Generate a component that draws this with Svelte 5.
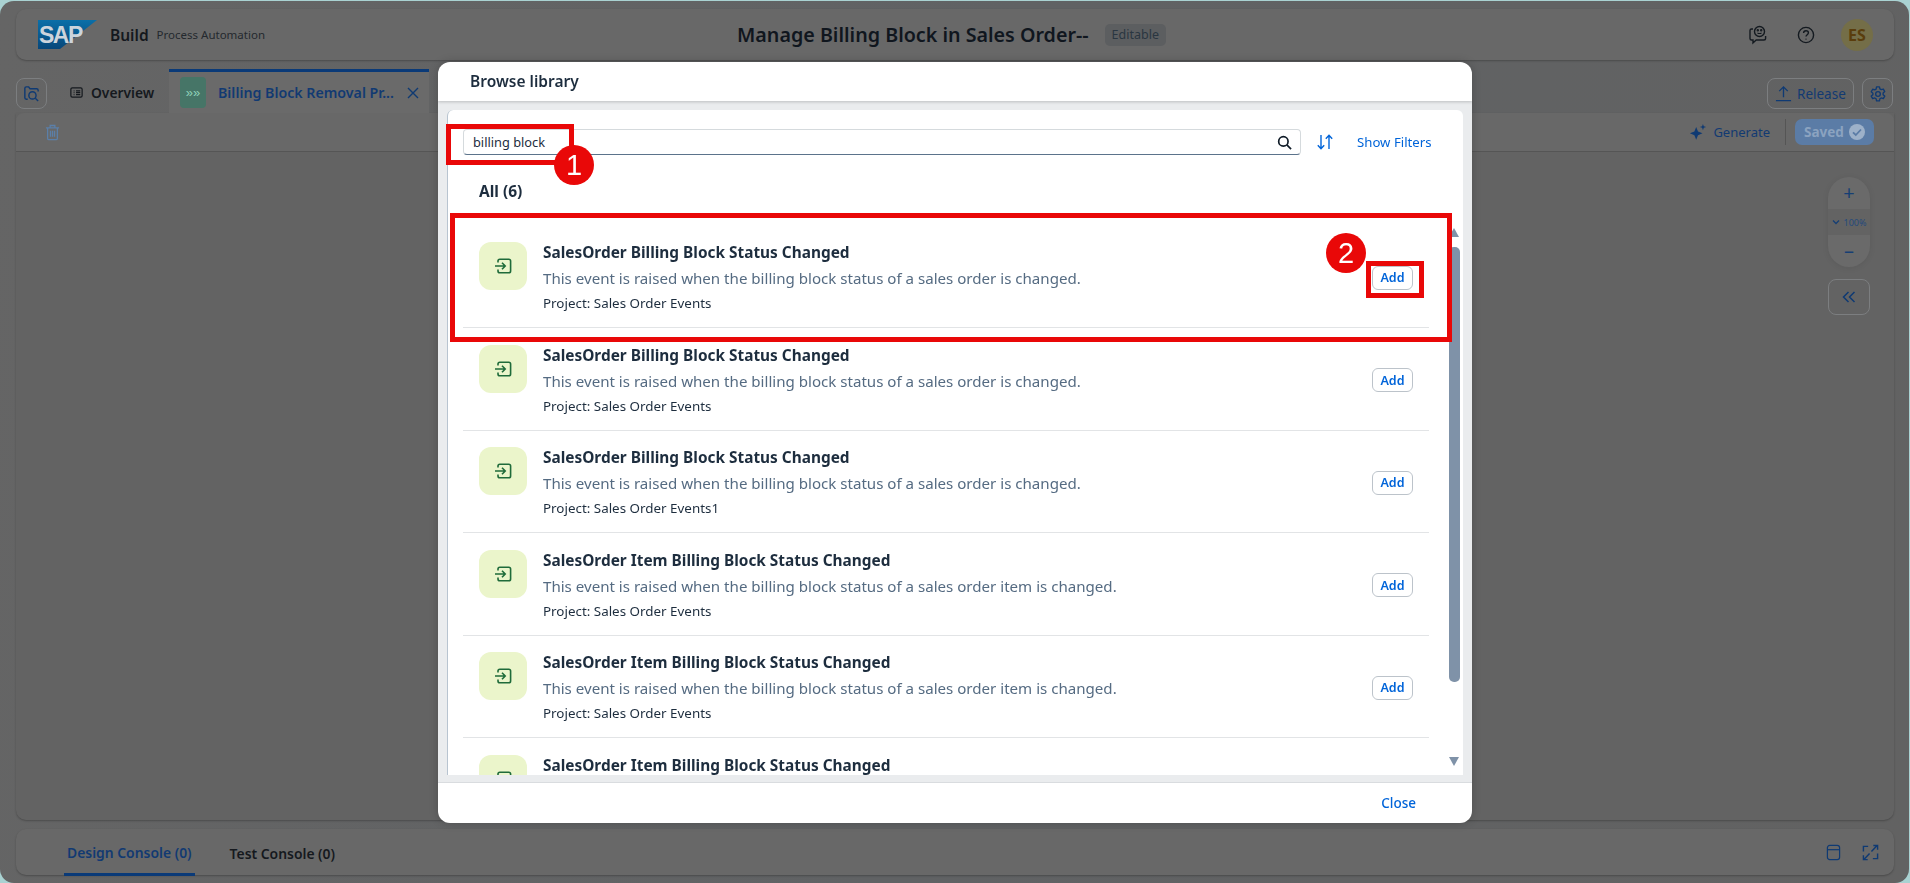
<script>
  const rows = [
    { title: 'SalesOrder Billing Block Status Changed', desc: 'This event is raised when the billing block status of a sales order is changed.', project: 'Sales Order Events' },
    { title: 'SalesOrder Billing Block Status Changed', desc: 'This event is raised when the billing block status of a sales order is changed.', project: 'Sales Order Events' },
    { title: 'SalesOrder Billing Block Status Changed', desc: 'This event is raised when the billing block status of a sales order is changed.', project: 'Sales Order Events1' },
    { title: 'SalesOrder Item Billing Block Status Changed', desc: 'This event is raised when the billing block status of a sales order item is changed.', project: 'Sales Order Events' },
    { title: 'SalesOrder Item Billing Block Status Changed', desc: 'This event is raised when the billing block status of a sales order item is changed.', project: 'Sales Order Events' },
    { title: 'SalesOrder Item Billing Block Status Changed' }
  ];
</script>

<div class="shell">
  <header class="card top">
    <div class="brand">
      <svg class="logo" viewBox="0 0 59 29" width="59" height="29" aria-hidden="true">
        <defs>
          <linearGradient id="sapg" x1="0" y1="0" x2="0" y2="1">
            <stop offset="0" stop-color="#0b6fa8" />
            <stop offset="1" stop-color="#07477a" />
          </linearGradient>
        </defs>
        <polygon points="0,0 59,0 22,29 0,29" fill="url(#sapg)" />
        <text x="1" y="23" class="logotext">SAP</text>
      </svg>
      <span class="build">Build</span>
      <span class="pa">Process Automation</span>
    </div>
    <div class="titlewrap">
      <span class="title">Manage Billing Block in Sales Order--</span>
      <span class="badge">Editable</span>
    </div>
    <div class="topicons">
      <svg viewBox="0 0 20 20" width="20" height="20" fill="none" stroke="#141a20" stroke-width="1.4" aria-hidden="true">
        <circle cx="11.5" cy="6.5" r="5" />
        <path d="M9.5 7.8c1 1 3 1 4 0" stroke-width="1.1" />
        <circle cx="9.8" cy="5.2" r=".5" fill="#141a20" />
        <circle cx="13.2" cy="5.2" r=".5" fill="#141a20" />
        <path d="M5 4H3.5C2.5 4 2 4.6 2 5.5v8C2 14.5 2.6 15 3.5 15H5v3l3.2-3H16c1 0 1.6-.6 1.6-1.5V11" />
      </svg>
      <svg viewBox="0 0 20 20" width="20" height="20" fill="none" stroke="#141a20" stroke-width="1.4" aria-hidden="true">
        <circle cx="10" cy="10" r="7.6" />
        <path d="M7.6 8c0-1.5 1.1-2.3 2.4-2.3s2.4.9 2.4 2.1c0 1.9-2.4 1.9-2.4 3.8" />
        <circle cx="10" cy="14.1" r=".7" fill="#141a20" stroke="none" />
      </svg>
      <span class="avatar">ES</span>
    </div>
  </header>

  <nav class="tabs">
    <button class="iconbtn" aria-label="Search">
      <svg viewBox="0 0 20 20" width="19" height="19" fill="none" stroke="#0f3a73" stroke-width="1.5" aria-hidden="true">
        <path d="M6 16H4.5C3.6 16 3 15.4 3 14.5v-10C3 3.6 3.6 3 4.5 3H7l1.4 2h7c.9 0 1.6.6 1.6 1.5V8" />
        <circle cx="11" cy="12" r="3.8" />
        <path d="M14 15l3 3" />
      </svg>
    </button>
    <div class="tab overview">
      <svg viewBox="0 0 16 16" width="15" height="15" fill="none" stroke="#15191e" stroke-width="1.3" aria-hidden="true">
        <rect x="2" y="3" width="12" height="10" rx="1.5" />
        <path d="M5 6.2h.8M7.5 6.2H12M5 8.2h.8M7.5 8.2H12M5 10.2h.8M7.5 10.2H12" />
      </svg>
      <span>Overview</span>
    </div>
    <div class="tab active">
      <span class="tile" aria-hidden="true">»»</span>
      <span class="tabtext">Billing Block Removal Pr...</span>
      <svg viewBox="0 0 14 14" width="14" height="14" fill="none" stroke="#0f3a73" stroke-width="1.4" aria-hidden="true">
        <path d="M2 2l10 10M12 2L2 12" />
      </svg>
    </div>
    <div class="tabactions">
      <button class="outline release">
        <svg viewBox="0 0 18 18" width="17" height="17" fill="none" stroke="#0f3a73" stroke-width="1.4" aria-hidden="true">
          <path d="M9 13V2M4.5 6.5L9 2l4.5 4.5M1 16.5h16" />
        </svg>
        <span>Release</span>
      </button>
      <button class="iconbtn gear" aria-label="Settings">
        <svg viewBox="0 0 20 20" width="18" height="18" fill="none" stroke="#0f3a73" stroke-width="1.5" aria-hidden="true">
          <path d="M8.4 2h3.2l.5 2.3 1.5.9 2.3-.7 1.6 2.8-1.8 1.6v1.800l1.800 1.600-1.600 2.800-2.300-.7-1.500.9-.5 2.300H8.400l-.5-2.300-1.500-.9-2.300.7-1.600-2.800 1.800-1.600V9.100L2.500 7.500l1.600-2.800 2.300.7 1.500-.9z" stroke-linejoin="round" />
          <circle cx="10" cy="10" r="2.6" />
        </svg>
      </button>
    </div>
  </nav>

  <main class="workspace">
    <div class="toolbar">
      <svg class="trash" viewBox="0 0 16 18" width="15" height="17" fill="none" stroke="#5b7fa8" stroke-width="1.4" aria-hidden="true">
        <path d="M1 4h14M5.500 4V1.500h5V4M2.800 4v11.500c0 .6.400 1 1 1h8.400c.6 0 1-.4 1-1V4M5.800 7v6.500M8 7v6.500M10.200 7v6.500" />
      </svg>
      <div class="toolright">
        <span class="generate">
          <svg viewBox="0 0 20 20" width="18" height="18" fill="#0f3a73" aria-hidden="true">
            <path d="M8 4.500l2 5 5 2-5 2-2 5-2-5-5-2 5-2zM15.500 1l.9 2.600L19 4.500l-2.600.9-.9 2.600-.9-2.600L12 4.500l2.600-.9z" />
          </svg>
          <span>Generate</span>
        </span>
        <span class="vsep"></span>
        <span class="saved">
          <span>Saved</span>
          <svg viewBox="0 0 16 16" width="16" height="16" aria-hidden="true">
            <circle cx="8" cy="8" r="8" fill="#9db1c9" />
            <path d="M4 8.300l2.800 2.700L12 5.500" fill="none" stroke="#5b7ca6" stroke-width="1.8" />
          </svg>
        </span>
      </div>
    </div>
    <div class="canvas">
      <div class="canvastools">
        <div class="zoompill">
          <span class="zbtn">+</span>
          <span class="zlevel"><svg viewBox="0 0 8 6" width="8" height="6" fill="none" stroke="#163f74" stroke-width="1.3" aria-hidden="true"><path d="M1 1.500l3 3 3-3" /></svg>100%</span>
          <span class="zbtn">–</span>
        </div>
        <button class="collapse" aria-label="Collapse">
          <svg viewBox="0 0 14 12" width="14" height="12" fill="none" stroke="#0f3a73" stroke-width="1.5" aria-hidden="true"><path d="M6.500 1L1.500 6l5 5M12.500 1l-5 5 5 5" /></svg>
        </button>
      </div>
    </div>
  </main>

  <footer class="card console">
    <div class="ctab on">Design Console (0)</div>
    <div class="ctab">Test Console (0)</div>
    <div class="consoleicons">
      <svg viewBox="0 0 16 18" width="15" height="17" fill="none" stroke="#0f3a73" stroke-width="1.3" aria-hidden="true">
        <rect x="1.500" y="1.500" width="13" height="15" rx="2.500" /><path d="M1.500 6h13" />
      </svg>
      <svg viewBox="0 0 18 18" width="17" height="17" fill="none" stroke="#0f3a73" stroke-width="1.5" aria-hidden="true">
        <path d="M1.500 8V2.500h5M16.500 10v5.500h-5M10 8l6-6.500M12 1.500h4.500V6M8 10l-6 6.500M6 16.500H1.500V12" />
      </svg>
    </div>
  </footer>
</div>

<div class="overlay">
  <section class="dialog">
    <h2 class="dhead">Browse library</h2>
    <div class="dbody">
      <div class="panel">
        <div class="searchrow">
          <div class="search">
            <span class="q">billing block</span>
            <svg viewBox="0 0 16 16" width="15" height="15" fill="none" stroke="#101c28" stroke-width="1.8" aria-hidden="true">
              <circle cx="6.800" cy="6.800" r="5" /><path d="M10.500 10.500L15 15" />
            </svg>
          </div>
          <svg class="sort" viewBox="0 0 18 18" width="18" height="18" fill="none" stroke="#0064d9" stroke-width="1.4" aria-hidden="true">
            <path d="M5 2v13.500M1.800 12.300L5 15.800l3.200-3.500M13 16V2.500M9.800 5.700L13 2.200l3.200 3.500" />
          </svg>
          <span class="filters">Show Filters</span>
        </div>
        <div class="allcount">All (6)</div>
        <div class="listwrap">
          <ul class="list">
            {#each rows as r}
              <li class="row">
                <span class="evt">
                  <svg viewBox="0 0 18 16" width="18" height="16" fill="none" stroke="#1f6b3a" stroke-width="1.6" aria-hidden="true">
                    <path d="M4 4.500V3c0-1 .6-1.800 1.800-1.800h9c1.100 0 1.800.7 1.800 1.800v10c0 1-.7 1.800-1.800 1.800h-9C4.600 14.800 4 14 4 13v-1.500" />
                    <path d="M1 8h10M8 4.800L11.200 8 8 11.200" />
                  </svg>
                </span>
                <div class="info">
                  <div class="rtitle">{r.title}</div>
                  {#if r.desc}
                    <div class="rdesc">{r.desc}</div>
                    <div class="rproj">Project: {r.project}</div>
                  {/if}
                </div>
                {#if r.desc}
                  <button class="add">Add</button>
                {/if}
              </li>
            {/each}
          </ul>
          <div class="scrollbar" aria-hidden="true">
            <span class="arrow up"></span>
            <span class="thumb"></span>
            <span class="arrow down"></span>
          </div>
        </div>
      </div>
    </div>
    <div class="dfoot"><span class="close">Close</span></div>
  </section>

  <span class="mark m1"></span>
  <span class="num n1">1</span>
  <span class="mark m2"></span>
  <span class="num n2">2</span>
  <span class="mark m3"></span>
</div>

<style>
  :global(body) {
    margin: 0;
    background: #a9d2d2;
    font-family: "Noto Sans", "Open Sans", sans-serif;
    overflow: hidden;
  }
  button {
    font: inherit;
    background: none;
    cursor: pointer;
    padding: 0;
  }
  .shell {
    box-sizing: border-box;
    width: 1909px;
    height: 882px;
    margin-top: 1px;
    padding: 8px 15px 8px 16px;
    display: flex;
    flex-direction: column;
    background: linear-gradient(100deg, #656565 0%, #606264 50%, #626262 100%);
    border-radius: 14px;
    color: #14181d;
  }
  .card {
    background: #686868;
    border-radius: 10px;
    box-shadow: 0 1px 2px rgba(0, 0, 0, 0.25);
  }
  .top {
    height: 51px;
    display: grid;
    grid-template-columns: 1fr auto 1fr;
    align-items: center;
    padding: 0 21px 0 22px;
    flex: none;
  }
  .brand {
    display: flex;
    align-items: center;
  }
  .logo {
    margin-right: 13px;
  }
  .logotext {
    font: 700 23px "Liberation Sans", sans-serif;
    fill: #ccd4dc;
    letter-spacing: -1.5px;
  }
  .build {
    font-size: 15.5px;
    font-weight: 600;
    color: #14181d;
    margin-right: 8px;
  }
  .pa {
    font-size: 11.5px;
    color: #24292e;
  }
  .titlewrap {
    display: flex;
    align-items: center;
    gap: 16px;
    margin-left: -8px;
  }
  .title {
    font-size: 19.7px;
    font-weight: 600;
    color: #10161e;
  }
  .badge {
    font-size: 12.5px;
    color: #2a3641;
    background: #5c5e60;
    border-radius: 5px;
    padding: 0 7px;
    height: 22px;
    line-height: 22px;
  }
  .topicons {
    display: flex;
    align-items: center;
    justify-content: flex-end;
    gap: 28px;
  }
  .avatar {
    width: 32px;
    height: 32px;
    border-radius: 50%;
    background: #746e48;
    color: #5a3d0c;
    font-size: 16px;
    font-weight: 700;
    display: flex;
    align-items: center;
    justify-content: center;
    margin-left: -3px;
  }
  .tabs {
    flex: none;
    display: flex;
    align-items: stretch;
    height: 44px;
    margin-top: 9px;
    position: relative;
  }
  .iconbtn {
    width: 31px;
    height: 31px;
    margin-top: 9px;
    flex: none;
    box-sizing: border-box;
    border: 1px solid #7c7e80;
    border-radius: 8px;
    display: flex;
    align-items: center;
    justify-content: center;
  }
  .tab {
    display: flex;
    align-items: center;
    font-weight: 600;
  }
  .overview {
    margin-left: 22px;
    gap: 7px;
    width: 100px;
    color: #15191e;
    margin-top: 2px;
    font-size: 13.8px;
  }
  .active {
    width: 260px;
    box-sizing: border-box;
    border-top: 3px solid #0a3a78;
    background: #6a6a6a;
    padding: 0 9px 0 11px;
    color: #123a72;
    font-size: 14.2px;
  }
  .tile {
    width: 26px;
    height: 31px;
    border-radius: 4px;
    background: #467567;
    color: #8fd0b8;
    font: 400 13px "Liberation Sans", sans-serif;
    display: flex;
    align-items: center;
    justify-content: center;
    margin-right: 12px;
  }
  .tabtext {
    flex: 1;
    white-space: nowrap;
  }
  .tabactions {
    margin-left: auto;
    display: flex;
    gap: 8px;
    margin-right: 1px;
  }
  .outline {
    height: 31px;
    margin-top: 9px;
    box-sizing: border-box;
    border: 1px solid #7c7e80;
    border-radius: 8px;
    display: flex;
    align-items: center;
    gap: 5px;
    padding: 0 7px;
    width: 87px;
    color: #123a72;
    font-size: 13.5px;
  }
  .gear {
    width: 31px;
  }
  .workspace {
    flex: 1;
    display: flex;
    flex-direction: column;
    background: #636363;
    border-radius: 0 0 10px 10px;
    box-shadow: 0 1px 2px rgba(0, 0, 0, 0.25);
    min-height: 0;
  }
  .toolbar {
    flex: none;
    height: 39px;
    box-sizing: border-box;
    border-bottom: 1px solid #555;
    background: #686868;
    border-radius: 8px 8px 0 0;
    display: flex;
    align-items: center;
    justify-content: space-between;
    padding: 0 20px 0 29px;
  }
  .toolright {
    display: flex;
    align-items: center;
  }
  .generate {
    display: flex;
    align-items: center;
    gap: 6px;
    color: #123a72;
    font-size: 13px;
  }
  .vsep {
    width: 1px;
    height: 26px;
    background: #555;
    margin: 0 9px 0 15px;
  }
  .saved {
    width: 79px;
    height: 26px;
    box-sizing: border-box;
    background: #5b7ca6;
    color: #8ba3c0;
    border-radius: 7px;
    font-size: 13.5px;
    font-weight: 700;
    display: flex;
    align-items: center;
    justify-content: center;
    gap: 5px;
  }
  .canvas {
    flex: 1;
    display: flex;
    justify-content: flex-end;
    padding: 25px 24px 0 0;
  }
  .canvastools {
    width: 42px;
    display: flex;
    flex-direction: column;
    gap: 12px;
  }
  .zoompill {
    height: 90px;
    background: #6a6a6a;
    border-radius: 21px;
    display: flex;
    flex-direction: column;
    box-shadow: 0 1px 6px rgba(0, 0, 0, 0.08);
  }
  .zbtn {
    flex: 1;
    display: flex;
    align-items: center;
    justify-content: center;
    color: #163f74;
    font-size: 20px;
    line-height: 1;
  }
  .zlevel {
    height: 26px;
    background: #636363;
    display: flex;
    align-items: center;
    justify-content: center;
    gap: 4px;
    color: #234a7c;
    font-size: 9px;
  }
  .collapse {
    height: 36px;
    box-sizing: border-box;
    border: 1px solid #7c7e80;
    border-radius: 8px;
    display: flex;
    align-items: center;
    justify-content: center;
  }
  .console {
    flex: none;
    height: 46px;
    margin-top: 9px;
    display: flex;
    align-items: stretch;
    padding-left: 48px;
    font-size: 13.9px;
    font-weight: 600;
  }
  .ctab {
    display: flex;
    align-items: center;
    height: 47px;
    box-sizing: border-box;
    padding: 2px 3px 0;
    color: #15191e;
    margin-right: 32px;
  }
  .ctab.on {
    color: #123a72;
    border-bottom: 3px solid #0a3a78;
  }
  .consoleicons {
    margin-left: auto;
    display: flex;
    align-items: center;
    gap: 21px;
    padding-right: 15px;
  }

  .overlay {
    position: fixed;
    inset: 0;
  }
  .dialog {
    position: absolute;
    left: 438px;
    top: 62px;
    width: 1034px;
    height: 761px;
    background: #fff;
    border-radius: 12px;
    overflow: hidden;
    display: flex;
    flex-direction: column;
    color: #1d2d3e;
    box-shadow: 0 0 10px rgba(0, 0, 0, 0.2);
  }
  .dhead {
    flex: none;
    margin: 0;
    height: 39px;
    line-height: 39px;
    padding-left: 32px;
    font-size: 15.5px;
    font-weight: 600;
    box-shadow: 0 1px 3px rgba(0, 0, 0, 0.2);
    position: relative;
  }
  .dbody {
    flex: 1;
    min-height: 0;
    background: #eaecee;
    padding: 9px 9px 7px;
    display: flex;
  }
  .panel {
    flex: 1;
    min-width: 0;
    background: #fff;
    border-radius: 6px 6px 0 0;
    border-left: 1px solid #b8c4d0;
    display: flex;
    flex-direction: column;
  }
  .searchrow {
    flex: none;
    display: flex;
    align-items: center;
    margin-top: 19px;
    padding-left: 15px;
    height: 26px;
  }
  .search {
    width: 838px;
    height: 26px;
    box-sizing: border-box;
    border: 1px solid #d5dadd;
    border-bottom-color: #5b738b;
    border-radius: 4px;
    display: flex;
    align-items: center;
    justify-content: space-between;
    padding: 0 8px 0 9px;
    font-size: 12.8px;
  }
  .sort {
    margin-left: 15px;
  }
  .filters {
    margin-left: 23px;
    font-size: 13.2px;
    color: #0064d9;
  }
  .allcount {
    flex: none;
    margin: 26px 0 0 31px;
    height: 20px;
    line-height: 20px;
    font-size: 15.5px;
    font-weight: 700;
  }
  .listwrap {
    flex: 1;
    min-height: 0;
    margin-top: 24.5px;
    display: flex;
    overflow: hidden;
  }
  .list {
    flex: 1;
    min-width: 0;
    list-style: none;
    margin: 0 0 0 15px;
    padding: 0;
  }
  .row {
    height: 102.5px;
    box-sizing: border-box;
    border-bottom: 1px solid #e2e4e6;
    display: flex;
    align-items: flex-start;
    padding: 16.5px 16px 0;
    position: relative;
  }
  .evt {
    flex: none;
    width: 48px;
    height: 48px;
    border-radius: 12px;
    background: #ebf5cb;
    display: flex;
    align-items: center;
    justify-content: center;
  }
  .info {
    margin-left: 16px;
    padding-top: 1px;
    flex: 1;
    min-width: 0;
  }
  .rtitle {
    font-size: 15.4px;
    font-weight: 700;
    line-height: 20px;
    color: #1d2d3e;
  }
  .rdesc {
    font-size: 15.1px;
    line-height: 20px;
    margin-top: 5px;
    color: #556b82;
  }
  .rproj {
    font-size: 13.4px;
    line-height: 18px;
    margin-top: 6px;
    color: #1d2d3e;
  }
  .add {
    flex: none;
    width: 41px;
    height: 24px;
    margin-top: 23.5px;
    box-sizing: border-box;
    border: 1px solid #bcc3ca;
    border-radius: 6px;
    color: #0064d9;
    font-size: 12.5px;
    font-weight: 600;
  }
  .scrollbar {
    flex: none;
    width: 11px;
    margin: 0 3px 0 20px;
    padding-top: 2px;
    display: flex;
    flex-direction: column;
  }
  .arrow {
    width: 0;
    height: 0;
    border-left: 5.5px solid transparent;
    border-right: 5.5px solid transparent;
  }
  .arrow.up {
    border-bottom: 9px solid #7f92a8;
  }
  .arrow.down {
    border-top: 9px solid #7f92a8;
    margin-top: 75px;
  }
  .thumb {
    height: 435px;
    margin-top: 10px;
    background: #7f92a8;
    border-radius: 5px;
  }
  .dfoot {
    flex: none;
    height: 41px;
    box-sizing: border-box;
    border-top: 1px solid #d9dcdf;
    display: flex;
    align-items: center;
    justify-content: flex-end;
    padding-right: 56px;
  }
  .close {
    font-size: 13.5px;
    color: #0064d9;
    font-weight: 500;
  }
  .mark {
    position: absolute;
    box-sizing: border-box;
    border: 5px solid #e90808;
  }
  .m1 {
    left: 446px;
    top: 124px;
    width: 128px;
    height: 41px;
  }
  .m2 {
    left: 450px;
    top: 213px;
    width: 1002px;
    height: 129px;
  }
  .m3 {
    left: 1366px;
    top: 261px;
    width: 58px;
    height: 37px;
  }
  .num {
    position: absolute;
    width: 40px;
    height: 40px;
    border-radius: 50%;
    background: #e90808;
    color: #fff;
    font: 400 29px/40px "Liberation Sans", sans-serif;
    text-align: center;
  }
  .n1 {
    left: 554px;
    top: 145px;
  }
  .n2 {
    left: 1326px;
    top: 233px;
  }
</style>
